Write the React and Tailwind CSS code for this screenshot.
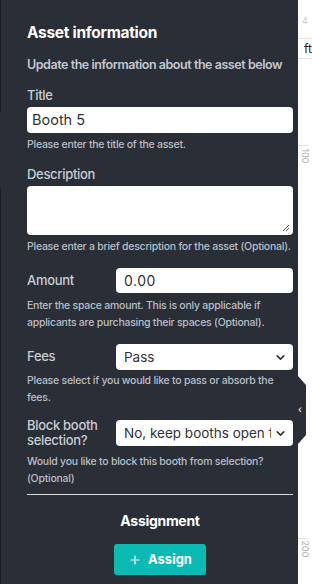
import { ChevronDown, Plus } from "lucide-react";

const font = { fontFamily: "Inter, 'Noto Sans', sans-serif" };

function Helper({ children }) {
  return <p className="text-[10.5px] leading-[17px] font-medium text-[#b9bec6] tracking-[-0.25px]">{children}</p>;
}

function SelectBox({ value }) {
  return (
    <div className="flex-1 min-w-0 h-[26px] bg-white rounded-[4px] flex items-center pl-[8px] pr-[6px]">
      <span className="flex-1 min-w-0 text-[13.5px] text-[#333] whitespace-nowrap overflow-hidden">{value}</span>
      <ChevronDown size={13} strokeWidth={3} className="text-[#333] shrink-0 ml-[3px]" />
    </div>
  );
}

function Label({ children, className = "" }) {
  return <span className={`w-[89px] shrink-0 text-[13px] font-medium text-[#c9cdd4] tracking-[-0.3px] ${className}`}>{children}</span>;
}

export default function App() {
  return (
    <div className="w-[312px] h-[584px] flex bg-white overflow-hidden relative" style={font}>
      <div className="w-[298px] shrink-0 h-full bg-[#292e37] pl-[27px] pr-[5px] pt-[22px] relative">
        <div className="absolute left-0 top-0 w-px h-[112px] bg-[#1b1f25]" />
        <div className="absolute left-0 top-[188px] w-px h-[396px] bg-[#1b1f25]" />
        <h1 className="text-[15.5px] leading-[22px] font-bold text-white tracking-[-0.3px]">Asset information</h1>
        <p className="mt-[12px] text-[12.5px] leading-[18px] font-semibold text-[#c3c8d0] tracking-[-0.45px]">Update the information about the asset below</p>

        <label className="block mt-[12px] text-[13px] leading-[18px] font-medium text-[#c9cdd4] tracking-[-0.3px]">Title</label>
        <div className="mt-[3px] h-[26px] bg-white rounded-[4px] flex items-center px-[5px]">
          <span className="text-[14.5px] text-[#333]">Booth 5</span>
        </div>
        <div className="mt-[3px]"><Helper>Please enter the title of the asset.</Helper></div>

        <label className="block mt-[12px] text-[13px] leading-[18px] font-medium text-[#c9cdd4] tracking-[-0.3px]">Description</label>
        <div className="mt-[3px] h-[49px] bg-white rounded-[4px] relative">
          <svg className="absolute right-[3px] bottom-[3px]" width="8" height="8" viewBox="0 0 8 8">
            <path d="M7 1 L1 7 M7 4 L4 7" stroke="#555" strokeWidth="1" />
          </svg>
        </div>
        <div className="mt-[3px]"><Helper>Please enter a brief description for the asset (Optional).</Helper></div>

        <div className="mt-[13px] flex items-center">
          <Label>Amount</Label>
          <div className="flex-1 min-w-0 h-[25px] bg-white rounded-[4px] flex items-center px-[8px]">
            <span className="text-[14px] text-[#333] tracking-[0.5px]">0.00</span>
          </div>
        </div>
        <div className="mt-[4px]"><Helper>Enter the space amount. This is only applicable if applicants are purchasing their spaces (Optional).</Helper></div>

        <div className="mt-[13px] flex items-center">
          <Label>Fees</Label>
          <SelectBox value="Pass" />
        </div>
        <div className="mt-[2px]"><Helper>Please select if you would like to pass or absorb the fees.</Helper></div>

        <div className="mt-[12px] flex items-center">
          <Label className="leading-[15px] text-[13.5px]">Block booth selection?</Label>
          <SelectBox value="No, keep booths open for selection" />
        </div>
        <div className="mt-[5px]"><Helper>Would you like to block this booth from selection? (Optional)</Helper></div>

        <div className="mt-[7px] h-px bg-[#d5d8dd]" />

        <h2 className="mt-[17px] text-center text-[14px] leading-[18px] font-bold text-white tracking-[-0.3px]">Assignment</h2>
        <div className="mt-[14px] flex justify-center">
          <button className="w-[92px] h-[31px] bg-[#0bbab3] rounded-[3px] flex items-center justify-center gap-[6px] text-white text-[13px] font-bold">
            <Plus size={14} strokeWidth={2} /> Assign
          </button>
        </div>
      </div>

      {/* canvas ruler on the right */}
      <div className="flex-1 h-full relative bg-white">
        <div className="absolute left-[4px] top-[14px] text-[9px] text-[#ccc]">4</div>
        <div className="absolute left-0 right-0 top-[38px] h-[21px] border-y border-[#e5e5e5] flex items-center pl-[6px]">
          <span className="text-[12px] text-[#222]">ft</span>
        </div>
        <div className="absolute left-0 w-[10px] top-[145px] h-px bg-[#e0e0e0]" />
        <div className="absolute left-[-1px] top-[151px] text-[9px] leading-[10px] text-[#aaa] rotate-90">100</div>
        <div className="absolute left-0 w-[10px] top-[538px] h-px bg-[#e0e0e0]" />
        <div className="absolute left-[-1px] top-[544px] text-[9px] leading-[10px] text-[#aaa] rotate-90">200</div>
      </div>

      {/* collapse tab */}
      <div className="absolute left-[297px] top-[376px] w-[9px] h-[68px]">
        <svg width="9" height="68" viewBox="0 0 9 68" className="absolute inset-0">
          <polygon points="0,0 1,0 9,9 9,59 1,68 0,68" fill="#292e37" />
        </svg>
        <span className="absolute left-[1px] top-[27px] text-[10px] leading-[12px] text-white">‹</span>
      </div>
    </div>
  );
}
